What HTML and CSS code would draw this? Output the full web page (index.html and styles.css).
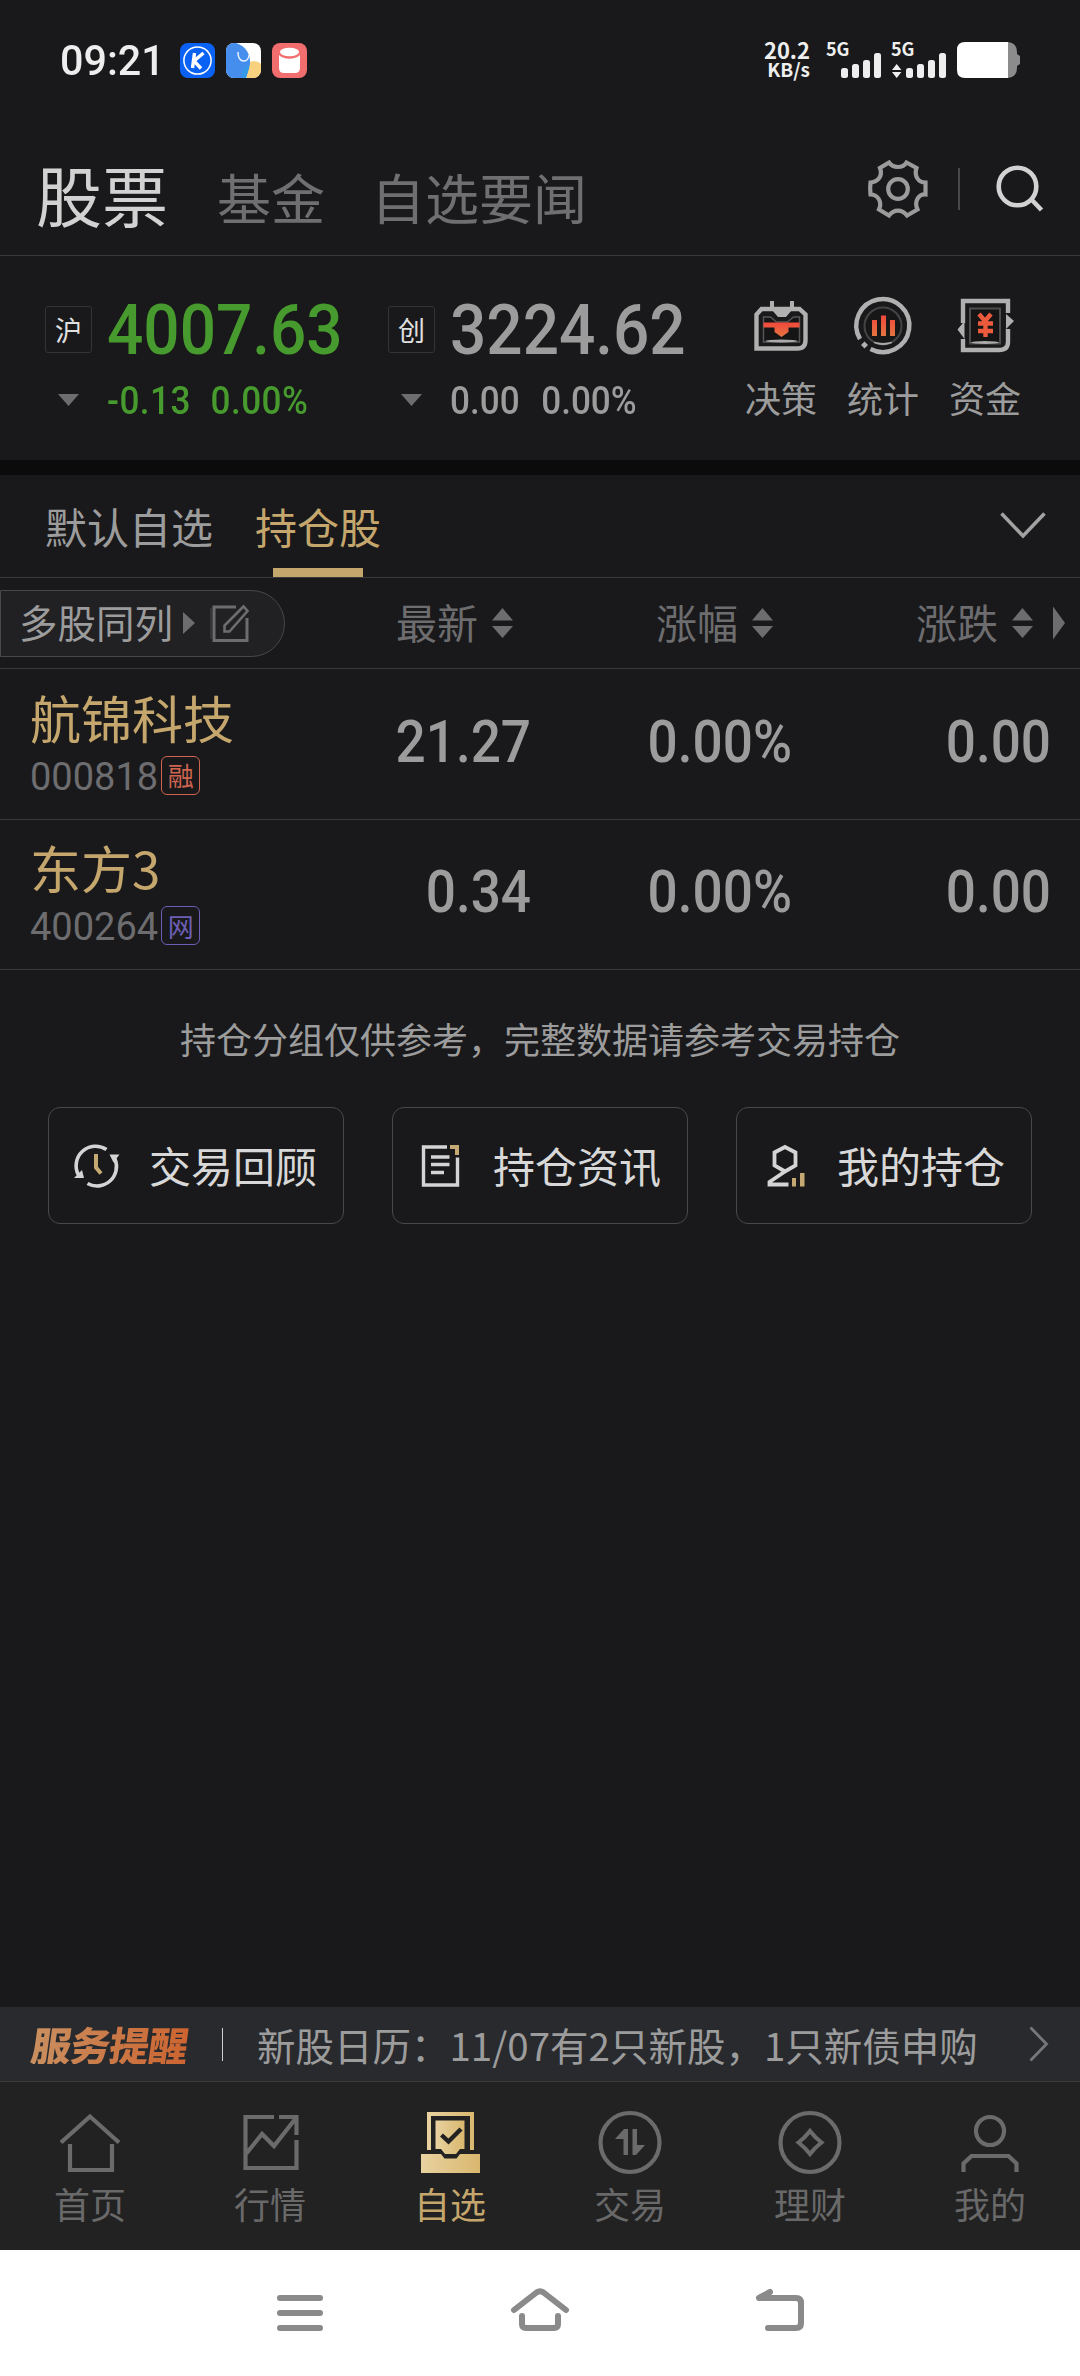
FILE: index.html
```html
<!DOCTYPE html>
<html lang="zh-CN">
<head>
    <meta charset="UTF-8">
    <title>自选 - 持仓股</title>
    <link rel="stylesheet" href="styles.css">
</head>
<body>
    <div class="app">
        <!-- Status bar -->
        <div class="status-bar">
            <span class="clock num">09:21</span>
            <div class="app-icons">
                <svg width="35" height="35" viewBox="0 0 35 35">
                    <rect width="35" height="35" rx="8" fill="#0a62f5"/>
                    <circle cx="17.5" cy="17.5" r="13.6" fill="none" stroke="#fff" stroke-width="1.5"/>
                    <path d="M14.500 10l-2 15M23.500 10l-9.500 8 7 7.500" fill="none" stroke="#fff" stroke-width="3.400"/>
                </svg>
                <svg width="35" height="35" viewBox="0 0 35 35">
                    <clipPath id="round"><rect width="35" height="35" rx="8"/></clipPath>
                    <g clip-path="url(#round)">
                        <rect width="35" height="35" fill="#fff"/>
                        <circle cx="28" cy="28" r="10" fill="#f9d27f"/>
                        <path d="M0 0h10c10 3 15 12 14 21-1 6-3 10-4 14H0z" fill="#468eee"/>
                        <path d="M17 35c-3-5 1-11 6-13 0 5-2 9-3 13z" fill="#359be8"/>
                        <path d="M12 9c0 6 2 9 6 9 3 0 5-3 5-6" fill="none" stroke="#e8f2ff" stroke-width="1.5"/>
                    </g>
                </svg>
                <svg width="35" height="35" viewBox="0 0 35 35">
                    <rect width="35" height="35" rx="8" fill="#f26d6e"/>
                    <ellipse cx="17.5" cy="9" rx="9.600" ry="4.200" fill="#fff"/>
                    <path d="M7 12c5 5 16 5 21 0v13q0 5-5 5H12q-5 0-5-5z" fill="#fff"/>
                </svg>
            </div>
            <div class="net-speed"><span>20.2</span><small>KB/s</small></div>
            <svg class="signal" width="54" height="36" viewBox="0 0 54 36">
                <text class="signal-text" x="-1" y="14">5G</text>
                <g fill="#eee"><rect x="14" y="26" width="7" height="10" rx="2.5"/><rect x="25" y="22" width="7" height="14" rx="2.5"/><rect x="36" y="18" width="7" height="18" rx="2.5"/><rect x="47" y="11" width="7" height="25" rx="2.5"/></g>
            </svg>
            <svg class="signal" width="54" height="36" viewBox="0 0 54 36">
                <text class="signal-text" x="-1" y="14">5G</text>
                <path d="M0 28l4.700-6 4.700 6zM0 30l4.700 6 4.700-6z" fill="#eee"/>
                <g fill="#eee"><rect x="14" y="26" width="7" height="10" rx="2.5"/><rect x="25" y="22" width="7" height="14" rx="2.5"/><rect x="36" y="18" width="7" height="18" rx="2.5"/><rect x="47" y="11" width="7" height="25" rx="2.5"/></g>
            </svg>
            <svg width="63" height="36" viewBox="0 0 63 36">
                <path d="M51 0q9 1 9 10v2l3 2v8l-3 2v2q0 9-9 10z" fill="#8c8c8c"/>
                <path d="M8 0h43v36H8q-8 0-8-8V8q0-8 8-8z" fill="#fff"/>
            </svg>
        </div>

        <!-- Top navigation -->
        <div class="header">
            <span class="header-tab active">股票</span>
            <span class="header-tab">基金</span>
            <span class="header-tab">自选要闻</span>
            <div class="header-tools">
                <svg width="60" height="58" viewBox="0 0 60 58" fill="none" stroke="#9b9b9b" stroke-width="4.200">
                    <path d="M21 2.500C25 8.500 35 8.500 38.500 2.500L48.500 8C46 16 50 22.500 57.500 22.500V34.500C50 34 46 42 49.500 49.500L39 55.500C34 49 26 49 21 55.500L11 49.500C14.500 42 10 34.500 2.500 34.500Q1.800 28 2.500 22.500C10 22 15 16 12 8Z"/>
                    <circle cx="30" cy="29" r="9.800"/>
                </svg>
                <i class="tool-divider"></i>
                <svg width="48" height="48" viewBox="0 0 48 48" fill="none" stroke="#d2d2d2" stroke-width="4.600">
                    <circle cx="21.500" cy="21.500" r="18.800"/>
                    <path d="M35 34l10.500 11"/>
                </svg>
            </div>
        </div>

        <!-- Market indices -->
        <div class="indices">
            <div class="index down">
                <span class="index-badge">沪</span>
                <span class="index-value num">4007.63</span>
                <i class="triangle-down"></i>
                <span class="index-change num"><span>-0.13</span><span>0.00%</span></span>
            </div>
            <div class="index">
                <span class="index-badge">创</span>
                <span class="index-value num">3224.62</span>
                <i class="triangle-down"></i>
                <span class="index-change num"><span>0.00</span><span>0.00%</span></span>
            </div>
            <div class="shortcuts">
                <div class="shortcut">
                    <svg width="58" height="58" viewBox="0 0 58 58">
                        <defs>
                            <linearGradient id="red" x1="0" y1="0" x2="0" y2="1"><stop offset="0" stop-color="#f2483c"/><stop offset="1" stop-color="#e4753f"/></linearGradient>
                        </defs>
                        <path d="M4.500 51.500V17.500l5-5.500h38l6 5.500V43q0 8.500-8 8.500z" fill="none" stroke="#b0b0b0" stroke-width="4.400"/>
                        <path d="M18 4h4v6h16V4h4v9h-2l-6 7h-8l-6-7h-2z" fill="#b0b0b0"/>
                        <path d="M11.500 20h7l6 5h11l6-5h6v25h-36z" fill="#151515" stroke="#555" stroke-width="1.500"/>
                        <ellipse cx="29.500" cy="44" rx="16" ry="1.500" fill="#aaa"/>
                        <path d="M11.500 25.500h36v5H36.500V35l-7 5-7-5v-4.500h-11z" fill="url(#red)"/>
                    </svg>
                    <span>决策</span>
                </div>
                <div class="shortcut">
                    <svg width="58" height="58" viewBox="0 0 58 58">
                        <path d="M6 42A26.500 26.500 0 1 1 16.500 52" fill="none" stroke="#b0b0b0" stroke-width="4.500"/>
                        <circle cx="29" cy="29" r="18.500" fill="#171717" stroke="#444" stroke-width="2"/>
                        <path d="M20 45.500q9 4 18 0-9 2-18 0z" fill="#ddd" stroke="#aaa"/>
                        <path d="M7 48l3.500-3.500L14 48l-3.500 3.500z" fill="#b0b0b0"/>
                        <path d="M18 23h5v16h-5zM27 18.500h5V39h-5zM36 23h5v16h-5z" fill="url(#red)"/>
                    </svg>
                    <span>统计</span>
                </div>
                <div class="shortcut">
                    <svg width="58" height="58" viewBox="0 0 58 58">
                        <path d="M7 26V4h45v12M52 32v13q0 8-9 8H7V42" fill="none" stroke="#b0b0b0" stroke-width="4.400"/>
                        <path d="M8.500 24v18l-7-9.500zM50 17v15l8-8z" fill="#b0b0b0"/>
                        <rect x="14" y="11.500" width="30" height="35" fill="#151515" stroke="#4c4c4c" stroke-width="2"/>
                        <ellipse cx="29" cy="45.500" rx="14" ry="1.500" fill="#aaa"/>
                        <path d="M23 17l6 7 6-7M22 26.500h15M22 34h15M29.500 23v17" fill="none" stroke="#ec5b3e" stroke-width="4.400"/>
                    </svg>
                    <span>资金</span>
                </div>
            </div>
        </div>

        <!-- Group tabs -->
        <div class="group-tabs">
            <span class="group-tab">默认自选</span>
            <span class="group-tab active">持仓股</span>
            <svg width="46" height="28" viewBox="0 0 46 28" fill="none" stroke="#a2a2a2" stroke-width="3.600"><path d="M1.500 1.500L23 24 44.500 1.500"/></svg>
        </div>

        <!-- Stock list -->
        <div class="list-head">
            <div class="multi-view">
                <span>多股同列</span>
                <i class="triangle-right"></i>
                <svg width="39" height="38" viewBox="0 0 39 38" fill="none" stroke="#6d6d6f" stroke-width="3">
                    <path d="M1 4v31" stroke-width="1.500" stroke="#3c3c3e"/>
                    <path d="M26 3H4v33.500h33V14"/>
                    <path d="M14.500 27.500v-6L33.500 2.500l4 4.500-18 20.500z" stroke-width="2.600"/>
                </svg>
            </div>
            <div class="sort"><span>最新</span><i class="sorter"></i></div>
            <div class="sort"><span>涨幅</span><i class="sorter"></i></div>
            <div class="sort"><span>涨跌</span><i class="sorter"></i></div>
            <i class="triangle-right more"></i>
        </div>
        <div class="stock">
            <div class="stock-name">
                <h3>航锦科技</h3>
                <p>000818<span class="tag tag-red">融</span></p>
            </div>
            <span class="cell num">21.27</span>
            <span class="cell num">0.00%</span>
            <span class="cell num">0.00</span>
        </div>
        <div class="stock">
            <div class="stock-name">
                <h3>东方3</h3>
                <p>400264<span class="tag tag-purple">网</span></p>
            </div>
            <span class="cell num">0.34</span>
            <span class="cell num">0.00%</span>
            <span class="cell num">0.00</span>
        </div>

        <p class="note">持仓分组仅供参考，完整数据请参考交易持仓</p>
        <div class="actions">
            <div class="action">
                <svg width="46" height="46" viewBox="0 0 46 46" fill="none" stroke="#d4d4d4" stroke-width="3.600">
                    <path d="M32.500 6.500A19.500 19.500 0 0 0 4.500 32M13.500 40.500A19.500 19.500 0 0 0 41 16"/>
                    <path d="M0 35h10l-2-8zM35.500 11.500h10l-6 8z" fill="#d4d4d4" stroke="none"/>
                    <path d="M22 11v13.500l5 6" stroke="#c5a973" stroke-width="4"/>
                </svg>
                <span>交易回顾</span>
            </div>
            <div class="action">
                <svg width="46" height="46" viewBox="0 0 46 46" fill="none" stroke="#d4d4d4" stroke-width="3.400">
                    <path d="M29 4H5.500v38h34V14.500M13 14h18.500M13 21.500h18.500M13 29.500h13"/>
                    <path d="M32 2h9v10h-4V6h-5z" fill="#c5a973" stroke="none"/>
                </svg>
                <span>持仓资讯</span>
            </div>
            <div class="action">
                <svg width="46" height="46" viewBox="0 0 46 46" fill="none" stroke="#d4d4d4" stroke-width="3.800">
                    <path d="M23 4l10.500 5.500v13L23 28.500 12.500 22.500v-13zM23 28.500L7.500 39v2.500H26.500"/>
                    <path d="M30 35h4v8.500h-4zM38 30h4.500v13.500h-4.500z" fill="#c5a973" stroke="none"/>
                </svg>
                <span>我的持仓</span>
            </div>
        </div>

        <!-- Service reminder -->
        <div class="notice">
            <b class="notice-title">服务提醒</b>
            <span class="notice-text">新股日历：11/07有2只新股，1只新债申购</span>
            <svg width="20" height="36" viewBox="0 0 20 36" fill="none" stroke="#77777a" stroke-width="2.800"><path d="M1.500 1.500L17.500 18l-16 16.500"/></svg>
        </div>

        <!-- Tab bar -->
        <div class="tab-bar">
            <div class="tab">
                <svg width="64" height="64" viewBox="0 0 64 64" fill="none" stroke="#6b6b6c" stroke-width="4.200"><path d="M3 32.500L32 6.500l29 26M12 34v26h42V34"/></svg>
                <span>首页</span>
            </div>
            <div class="tab">
                <svg width="64" height="64" viewBox="0 0 64 64" fill="none" stroke="#6b6b6c" stroke-width="4.200">
                    <path d="M36 7H7.500v51h51V30M41 7h17.500v18M8 44l16-20 12 12L58 8"/>
                </svg>
                <span>行情</span>
            </div>
            <div class="tab active">
                <svg width="64" height="64" viewBox="0 0 64 64">
                    <defs><linearGradient id="gold" x1="0" y1="0" x2="1" y2="0"><stop offset="0" stop-color="#e8d2a0"/><stop offset="1" stop-color="#d9b76e"/></linearGradient></defs>
                    <path d="M9 2h47v38h-4V6H13v34H9z" fill="url(#gold)"/>
                    <path d="M17.500 10.500h29V39H42l-4 5H27l-4-5h-5.500z" fill="url(#gold)"/>
                    <path d="M3 44h20l3.500 4.500h12L42 44h20v19H3z" fill="url(#gold)"/>
                    <path d="M23.500 25l7 6.500L43 19" fill="none" stroke="#222" stroke-width="4.400"/>
                </svg>
                <span>自选</span>
            </div>
            <div class="tab">
                <svg width="64" height="64" viewBox="0 0 64 64">
                    <circle cx="32" cy="32.500" r="29.500" fill="none" stroke="#6b6b6c" stroke-width="4.200"/>
                    <path d="M17 29l9-10h4v26h-4.500V29zM34.500 19h4.500v16h8l-9 10h-3.500z" fill="#6b6b6c"/>
                </svg>
                <span>交易</span>
            </div>
            <div class="tab">
                <svg width="64" height="64" viewBox="0 0 64 64" fill="none" stroke="#6b6b6c" stroke-width="4.200">
                    <circle cx="32" cy="32.500" r="29.500"/>
                    <path d="M32 21Q37 27.500 43.500 32.500 37 37.500 32 44 27 37.500 20.500 32.500 27 27.500 32 21z" stroke-width="4"/>
                </svg>
                <span>理财</span>
            </div>
            <div class="tab">
                <svg width="64" height="64" viewBox="0 0 64 64" fill="none" stroke="#6b6b6c" stroke-width="4.200">
                    <circle cx="32" cy="21" r="14"/>
                    <path d="M5.500 62v-8.500l8-7.500h37l8 7.500V62"/>
                </svg>
                <span>我的</span>
            </div>
        </div>

        <!-- System navigation -->
        <div class="system-nav">
            <svg width="60" height="48" viewBox="0 0 60 48"><path d="M10 9h40M10 24h40M10 39h40"/></svg>
            <svg width="60" height="48" viewBox="0 0 60 48"><path d="M4 21L26.500 3.500q3.500-2.500 7 0L56 21M12 27v8q0 4 4 4h28q4 0 4-4v-8"/></svg>
            <svg width="60" height="48" viewBox="0 0 60 48"><path d="M20 3L9 9h37q5 0 5 5v20q0 5-5 5H18"/></svg>
        </div>
    </div>
</body>
</html>
```
FILE: styles.css
```css
:root {
    --bg: #19191b;
    --line: #39393b;
    --text: #d2d2d2;
    --text-mid: #9c9c9c;
    --text-dim: #6d6d6f;
    --gold: #c5a76d;
    --green: #479a2d;
}

* {
    margin: 0;
    padding: 0;
    box-sizing: border-box;
}

body {
    font-family: 'Noto Sans CJK SC', sans-serif;
    background-color: var(--bg);
    color: var(--text-mid);
    line-height: 1;
}

svg {
    display: block;
    flex-shrink: 0;
    overflow: visible;
}

.app {
    display: flex;
    flex-direction: column;
    width: 1080px;
    height: 2376px;
    overflow: hidden;
}

/* condensed figures for prices */
.num {
    font-family: 'Roboto', 'Noto Sans CJK SC', sans-serif;
    font-weight: 500;
    white-space: nowrap;
    transform: scaleX(0.9);
    transform-origin: left center;
}

/* Status bar */
.status-bar {
    display: flex;
    align-items: center;
    height: 120px;
    padding: 0 60px;
    color: #eee;
}

.clock {
    width: 120px;
    font-size: 43px;
    transform: scaleX(0.96);
}

.app-icons {
    display: flex;
    gap: 11px;
    margin-right: auto;
}

.net-speed {
    display: flex;
    flex-direction: column;
    align-items: flex-end;
    margin-right: 17px;
    padding-bottom: 3px;
    font-size: 22px;
    font-weight: 700;
    line-height: 20px;
}

.net-speed small {
    font-size: 19px;
}

.signal {
    margin-right: 11px;
}

.signal-text {
    font-size: 18px;
    font-weight: 700;
    fill: #eee;
}

/* Top navigation */
.header {
    display: flex;
    height: 136px;
    padding: 0 36px;
    border-bottom: 1px solid var(--line);
}

.header-tab {
    margin-right: 46px;
    padding-top: 50px;
    font-size: 54px;
    color: #6f6f71;
}

.header-tab.active {
    margin-right: 49px;
    padding-top: 40px;
    font-size: 66px;
    color: var(--text);
}

.header-tools {
    display: flex;
    align-items: center;
    height: 137px;
    margin-left: auto;
}

.tool-divider {
    width: 2px;
    height: 42px;
    margin: 0 36px 0 30px;
    background-color: #48484a;
}

/* Market indices */
.indices {
    display: flex;
    height: 219px;
    padding-left: 45px;
    border-bottom: 15px solid #0b0b0b;
}

.index {
    display: grid;
    grid-template-columns: 62px 281px;
    grid-template-rows: 66px 50px;
    align-items: center;
    align-content: start;
    height: 204px;
    padding-top: 40px;
}

.index.down .num {
    color: var(--green);
}

.index-badge {
    display: flex;
    align-items: center;
    justify-content: center;
    width: 47px;
    height: 47px;
    border: 1px solid #343437;
    border-radius: 3px;
    font-size: 27px;
    color: #e0e0e0;
}

.index-value {
    font-size: 71px;
}

.index-change {
    display: flex;
    gap: 24px;
    padding-top: 29px;
    font-size: 39px;
}

.index.down .index-change {
    gap: 22px;
    letter-spacing: 0.500px;
}

.index.down .index-change::first-letter {
    letter-spacing: 3px;
}

.triangle-down {
    margin: 26px 0 0 13px;
    width: 21px;
    height: 12px;
    background-color: var(--text-dim);
    clip-path: polygon(0 0, 100% 0, 50% 100%);
}

.shortcuts {
    display: flex;
    gap: 30px;
    padding: 41px 0 0 14px;
}

.shortcut {
    display: flex;
    flex-direction: column;
    align-items: center;
    width: 72px;
    gap: 24px;
    font-size: 36px;
}

/* Group tabs */
.group-tabs {
    display: flex;
    align-items: center;
    height: 103px;
    padding: 0 34px 0 45px;
    border-bottom: 1px solid var(--line);
    font-size: 42px;
}

.group-tab {
    display: flex;
    align-items: center;
    position: relative;
    height: 102px;
    margin-right: 42px;
    padding-bottom: 1px;
}

.group-tab.active {
    color: var(--gold);
}

.group-tab.active::after {
    content: '';
    position: absolute;
    bottom: 0;
    left: 18px;
    width: 90px;
    height: 9px;
    background-color: var(--gold);
}

.group-tabs svg {
    margin-left: auto;
}

/* Stock list */
.list-head {
    display: grid;
    grid-template-columns: 285px 228px 260px 260px auto;
    align-items: center;
    height: 91px;
    border-bottom: 1px solid var(--line);
}

.list-head span {
    padding-bottom: 3px;
}

.multi-view {
    display: flex;
    align-items: center;
    height: 67px;
    padding-left: 18px;
    border: 1px solid #48484a;
    border-radius: 0 34px 34px 0;
    background-color: #212123;
    font-size: 38.500px;
}

.triangle-right {
    width: 12px;
    height: 22px;
    margin: 0 15px 0 10px;
    background-color: var(--text-dim);
    clip-path: polygon(0 0, 100% 50%, 0 100%);
}

.triangle-right.more {
    height: 33px;
    margin: 0 0 0 20px;
}

.sort {
    display: flex;
    align-items: center;
    justify-content: flex-end;
    font-size: 41px;
    color: var(--text-dim);
}

.sorter {
    width: 21px;
    height: 30px;
    margin-left: 14px;
    background-color: var(--text-dim);
    clip-path: polygon(0 42%, 50% 0, 100% 42%, 0 42%, 0 60%, 100% 60%, 50% 100%, 0 60%);
}

.stock {
    display: grid;
    grid-template-columns: 281px 250px 261px 259px;
    align-items: center;
    height: 150px;
    border-bottom: 1px solid var(--line);
}

.list-head + .stock {
    height: 151px;
}

.stock-name {
    padding-left: 30px;
}

.stock-name h3 {
    font-size: 51px;
    font-weight: 400;
    color: var(--gold);
}

.stock-name p {
    display: flex;
    align-items: center;
    height: 40px;
    margin-top: 14px;
    font-family: 'Roboto', 'Noto Sans CJK SC', sans-serif;
    font-size: 38px;
    color: var(--text-dim);
}

.tag {
    display: flex;
    align-items: center;
    justify-content: center;
    width: 39px;
    height: 39px;
    margin: 0 0 3px 3px;
    border: 1.500px solid;
    border-radius: 6px;
    font-family: 'Noto Sans CJK SC', sans-serif;
    font-size: 26px;
}

.tag-red {
    color: #cf6450;
}

.tag-purple {
    color: #6c5fb4;
}

.cell {
    padding-bottom: 6px;
    font-size: 59px;
    text-align: right;
    transform-origin: right center;
}

/* Holdings note and actions */
.note {
    margin-top: 50px;
    font-size: 36px;
    text-align: center;
}

.actions {
    display: grid;
    grid-template-columns: repeat(3, 296px);
    gap: 48px;
    margin: 51px 48px auto;
}

.action {
    display: flex;
    align-items: center;
    height: 117px;
    padding-left: 25px;
    border: 1px solid #48484a;
    border-radius: 12px;
    font-size: 42px;
    color: #d8d8d8;
}

.action span {
    margin-left: 29px;
    padding-bottom: 2px;
}

/* Service reminder */
.notice {
    display: flex;
    align-items: center;
    height: 75px;
    padding: 0 31px 0 32px;
    border-bottom: 1px solid #3c3c3c;
    background-color: #292a2e;
}

.notice-title {
    font-size: 40px;
    font-weight: 900;
    letter-spacing: -1px;
    background: linear-gradient(90deg, #c98f60, #cc6430);
    background-clip: text;
    -webkit-background-clip: text;
    color: transparent;
    transform: skewX(-8deg);
}

.notice-text {
    flex-grow: 1;
    margin-left: 34px;
    padding-left: 34px;
    border-left: 1px solid #d0d0d0;
    font-size: 38.500px;
    line-height: 33px;
    white-space: nowrap;
}

/* Tab bar */
.tab-bar {
    display: flex;
    height: 168px;
    padding-top: 28px;
    background-color: #222;
}

.tab {
    display: flex;
    flex-direction: column;
    align-items: center;
    gap: 11px;
    width: 180px;
    font-size: 36px;
    color: #69696a;
}

.tab.active {
    color: var(--gold);
}

/* System navigation */
.system-nav {
    display: flex;
    justify-content: center;
    gap: 180px;
    height: 126px;
    padding-top: 39px;
    background-color: #fff;
}

.system-nav path {
    fill: none;
    stroke: #8a8a8a;
    stroke-width: 6;
    stroke-linecap: round;
    stroke-linejoin: round;
}
```
